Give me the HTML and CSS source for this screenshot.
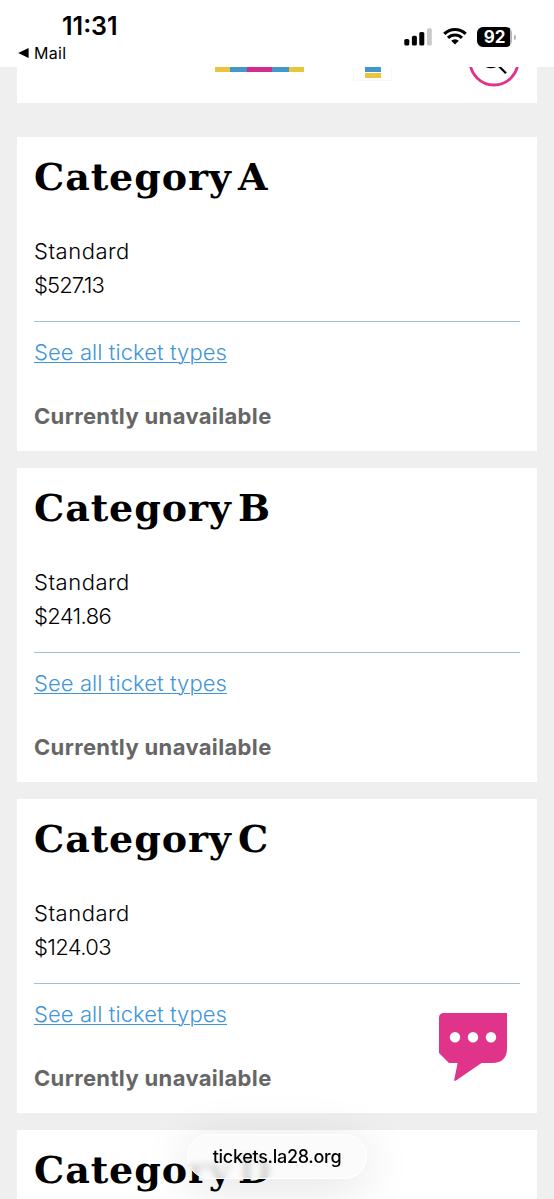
FILE: index.html
```html
<!DOCTYPE html>
<html lang="en">
<head>
    <meta charset="UTF-8">
    <meta name="viewport" content="width=device-width, initial-scale=1.0">
    <title>Tickets</title>
    <link rel="stylesheet" href="styles.css">
</head>
<body>
<div class="status-bar">
    <div class="status-left">
        <div class="time">11:31</div>
        <div class="back">
            <svg width="11" height="10" viewBox="0 0 11 10"><path d="M0.2 5 L10.6 0 V10 Z"/></svg>
            <span>Mail</span>
        </div>
    </div>
    <div class="status-right">
        <svg class="signal" width="28" height="18" viewBox="0 0 28 18">
            <rect x="0.3" y="11" width="5" height="6.6" rx="1.6"/>
            <rect x="7.9" y="7.8" width="5" height="9.8" rx="1.6"/>
            <rect x="15.3" y="4" width="5" height="13.6" rx="1.6"/>
            <rect x="23" y="0.2" width="4.8" height="17.4" rx="1.6" fill="#c8c8c8"/>
        </svg>
        <svg class="wifi" width="24" height="18" viewBox="0 0 24 18">
            <g fill="none" stroke="#000" stroke-width="3.2">
                <path d="M1.3 6.9 A15.2 15.2 0 0 1 22.7 6.9"/>
                <path d="M5 10.9 A9.9 9.9 0 0 1 19 10.9"/>
            </g>
            <path d="M12 17.5 L8.2 13.8 A5.4 5.4 0 0 1 15.8 13.8 Z"/>
        </svg>
        <div class="battery"><span class="level">92</span><span class="tip"></span></div>
    </div>
</div>

<div class="page">
    <div class="top-card">
        <div class="stripes">
            <span class="yellow w15"></span><span class="blue w17"></span><span class="pink w25"></span><span class="blue w17"></span><span class="yellow w15"></span>
        </div>
        <div class="ticket">
            <span class="blue"></span>
            <span class="yellow"></span>
        </div>
        <svg class="search" width="52" height="20" viewBox="0 0 52 20">
            <circle cx="26" cy="-6" r="24" fill="#fff" stroke="#e0348b" stroke-width="2.8"/>
            <g fill="none" stroke="#000" stroke-width="2.2">
                <circle cx="23" cy="-10" r="10.2"/>
                <path d="M30.5 -1.2 L38 6.2"/>
            </g>
        </svg>
    </div>

    <div class="card">
        <h2>Category A</h2>
        <div class="type">Standard</div>
        <div class="price tight">$527.13</div>
        <hr>
        <a class="link" href="#">See all ticket types</a>
        <div class="unavailable">Currently unavailable</div>
    </div>
    <div class="card">
        <h2>Category B</h2>
        <div class="type">Standard</div>
        <div class="price">$241.86</div>
        <hr>
        <a class="link" href="#">See all ticket types</a>
        <div class="unavailable">Currently unavailable</div>
    </div>
    <div class="card">
        <h2>Category C</h2>
        <div class="type">Standard</div>
        <div class="price">$124.03</div>
        <hr>
        <a class="link" href="#">See all ticket types</a>
        <div class="unavailable">Currently unavailable</div>
    </div>
    <div class="card last">
        <h2>Category D</h2>
    </div>
</div>

<svg class="chat" width="70" height="70" viewBox="0 0 70 70">
    <path fill="#e0348b" d="M6 1 H69 V36 Q69 51 54 51 H43.5 L18 68.6 Q16 69.6 16.3 67.5 L19.6 51 H11 L1 41 V6 Q1 1 6 1 Z"/>
    <g fill="#fff">
        <circle cx="17" cy="25.2" r="5.2"/>
        <circle cx="35" cy="25.2" r="5.2"/>
        <circle cx="53" cy="25.2" r="5.2"/>
    </g>
</svg>

<div class="url-pill">tickets.la28.org</div>
</body>
</html>
```
FILE: styles.css
```css
* {
    box-sizing: border-box;
}
body {
    margin: 0;
    height: 1199px;
    overflow: hidden;
    background-color: #efefef;
    font-family: Inter, "Liberation Sans", sans-serif;
    color: #000;
}
.status-bar {
    display: flex;
    justify-content: space-between;
    height: 67px;
    background-color: #fff;
}
.status-left {
    padding: 11px 0 0 18px;
}
.time {
    margin-left: 44px;
    font-size: 25px;
    font-weight: 600;
    line-height: 30px;
}
.back {
    display: flex;
    align-items: center;
    gap: 5px;
    font-size: 16px;
    font-weight: 400;
    line-height: 24px;
    letter-spacing: 0.3px;
}
.status-right {
    display: flex;
    align-items: flex-start;
    padding: 27px 38px 0 0;
}
.signal {
    margin-top: 1px;
}
.wifi {
    margin: 0 10px 0 11px;
}
.battery {
    display: flex;
    align-items: center;
    gap: 2px;
}
.level {
    width: 35px;
    height: 20px;
    border-radius: 6px;
    background: linear-gradient(90deg, #000 33px, #b5b5b5 33px);
    color: #fff;
    font-size: 17px;
    font-weight: 700;
    line-height: 20px;
    text-align: center;
}
.tip {
    width: 2px;
    height: 5px;
    border-radius: 0 2px 2px 0;
    background-color: #b5b5b5;
}
.page {
    height: 1132px;
    padding: 0 17px;
    overflow: hidden;
}
.top-card {
    display: flex;
    height: 36px;
    margin-bottom: 34px;
    padding-left: 198px;
    background-color: #fff;
}
.stripes {
    display: flex;
    height: 5px;
}
.w15 {
    width: 15px;
}
.w17 {
    width: 17px;
}
.w25 {
    width: 25px;
}
.yellow {
    background-color: #e8c53c;
}
.blue {
    background-color: #4297cb;
}
.pink {
    background-color: #cf2c8e;
}
.ticket {
    display: flex;
    flex-direction: column;
    align-items: center;
    gap: 1px;
    width: 39px;
    height: 14px;
    margin-left: 49px;
    border: 1px solid #f7f7f7;
    border-top: 0;
}
.ticket span {
    width: 16px;
    height: 5px;
}
.search {
    margin-left: 76px;
}
.card {
    height: 314px;
    margin-bottom: 17px;
    padding: 18px 17px;
    background-color: #fff;
}
.card.last {
    height: 69px;
    margin-bottom: 0;
    padding-bottom: 0;
}
h2 {
    margin: 0 0 35px;
    font-family: "DejaVu Serif", serif;
    font-size: 38px;
    font-weight: 700;
    line-height: 44px;
    letter-spacing: 0.9px;
    white-space: nowrap;
    word-spacing: -8px;
}
.last h2 {
    margin-bottom: 0;
}
.type,
.price,
.link,
.unavailable {
    font-size: 22px;
    font-weight: 300;
    line-height: 34px;
}
.type {
    letter-spacing: 0.5px;
}
.price {
    letter-spacing: -0.65px;
}
.price.tight {
    letter-spacing: -0.9px;
}
hr {
    height: 1px;
    margin: 19px 0 13px;
    border: 0;
    background-color: #a3c0d6;
}
.link {
    display: block;
    color: #3f95d8;
    letter-spacing: 0.08px;
    text-decoration-thickness: 1px;
    text-underline-offset: 2px;
}
.unavailable {
    margin-top: 30px;
    color: #666;
    font-weight: 700;
    letter-spacing: 0.35px;
}
.chat {
    position: absolute;
    left: 438px;
    top: 1012px;
}
.url-pill {
    position: absolute;
    left: 187px;
    top: 1134px;
    width: 180px;
    height: 45px;
    border: 1px solid #fff;
    border-radius: 23px;
    background-color: rgba(250, 250, 250, 0.85);
    backdrop-filter: blur(3px);
    box-shadow: 0 8px 50px rgba(0, 0, 0, 0.12);
    font-size: 18px;
    font-weight: 500;
    line-height: 44px;
    letter-spacing: -0.3px;
    text-align: center;
}
```
